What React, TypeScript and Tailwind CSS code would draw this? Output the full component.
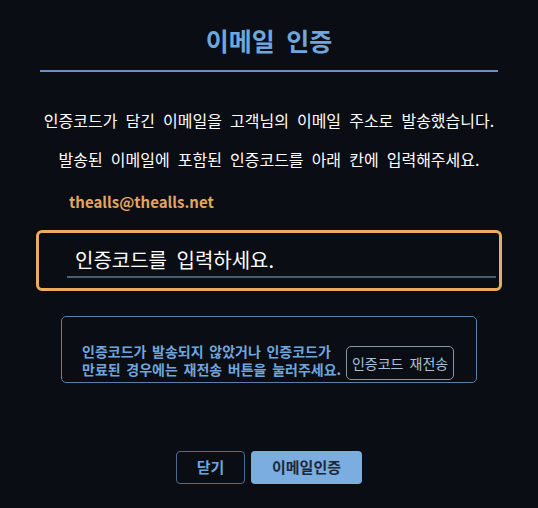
import React from "react";

export default function App() {
  return (
    <div
      className="w-[538px] h-[508px] bg-[#0a0d14] text-white overflow-hidden"
      style={{ fontFamily: '"Noto Sans CJK KR", "Noto Sans", sans-serif' }}
    >
      <div className="pt-[21px] flex flex-col items-center">
        <h1 className="text-[25px] leading-[38px] font-bold text-[#6fa6de] [word-spacing:6px]">이메일 인증</h1>
      </div>
      <div className="mx-[40px] mt-[11px] h-[2px] bg-[#6b93bf]" />
      <div className="mt-[37px] flex flex-col items-center text-[16px] leading-[22px] [word-spacing:4.5px] whitespace-nowrap">
        <p>인증코드가 담긴 이메일을 고객님의 이메일 주소로 발송했습니다.</p>
        <p className="mt-[17px]">발송된 이메일에 포함된 인증코드를 아래 칸에 입력해주세요.</p>
      </div>
      <div className="mt-[21px] ml-[69px] text-[15px] leading-[22px] font-bold text-[#e4a55e]">
        thealls@thealls.net
      </div>
      <div className="mt-[17px] mx-[36px] h-[61px] border-[3px] border-[#e8ad63] rounded-[6px] pl-[28px] pr-[3px] pt-[11px]">
        <div className="border-b-2 border-[#4b5d75] pl-[8px] text-[20px] leading-[32px] [word-spacing:5px]">
          인증코드를 입력하세요.
        </div>
      </div>
      <div className="mt-[25px] mx-[61px] h-[67px] border border-[#5c7fa8] rounded-[5px] flex items-end pl-[20px] pb-[2px]">
        <p className="mb-[2px] text-[14px] leading-[18px] font-bold text-[#6fa6de] [word-spacing:2.5px] whitespace-nowrap">
          인증코드가 발송되지 않았거나 인증코드가
          <br />
          만료된 경우에는 재전송 버튼을 눌러주세요.
        </p>
        <button className="ml-[5px] w-[108px] h-[34px] shrink-0 border border-[#8a97a8] rounded-[5px] text-[14px] text-[#a9c1dc] [word-spacing:3px] whitespace-nowrap">
          인증코드 재전송
        </button>
      </div>
      <div className="mt-[68px] flex justify-center gap-[6px]">
        <button className="w-[69px] h-[33px] border border-[#4c6c93] rounded-[4px] text-[15px] font-bold text-[#6fa6de]">
          닫기
        </button>
        <button className="w-[111px] h-[33px] bg-[#7bade0] rounded-[4px] text-[15px] font-bold text-[#1c2838]">
          이메일인증
        </button>
      </div>
    </div>
  );
}
